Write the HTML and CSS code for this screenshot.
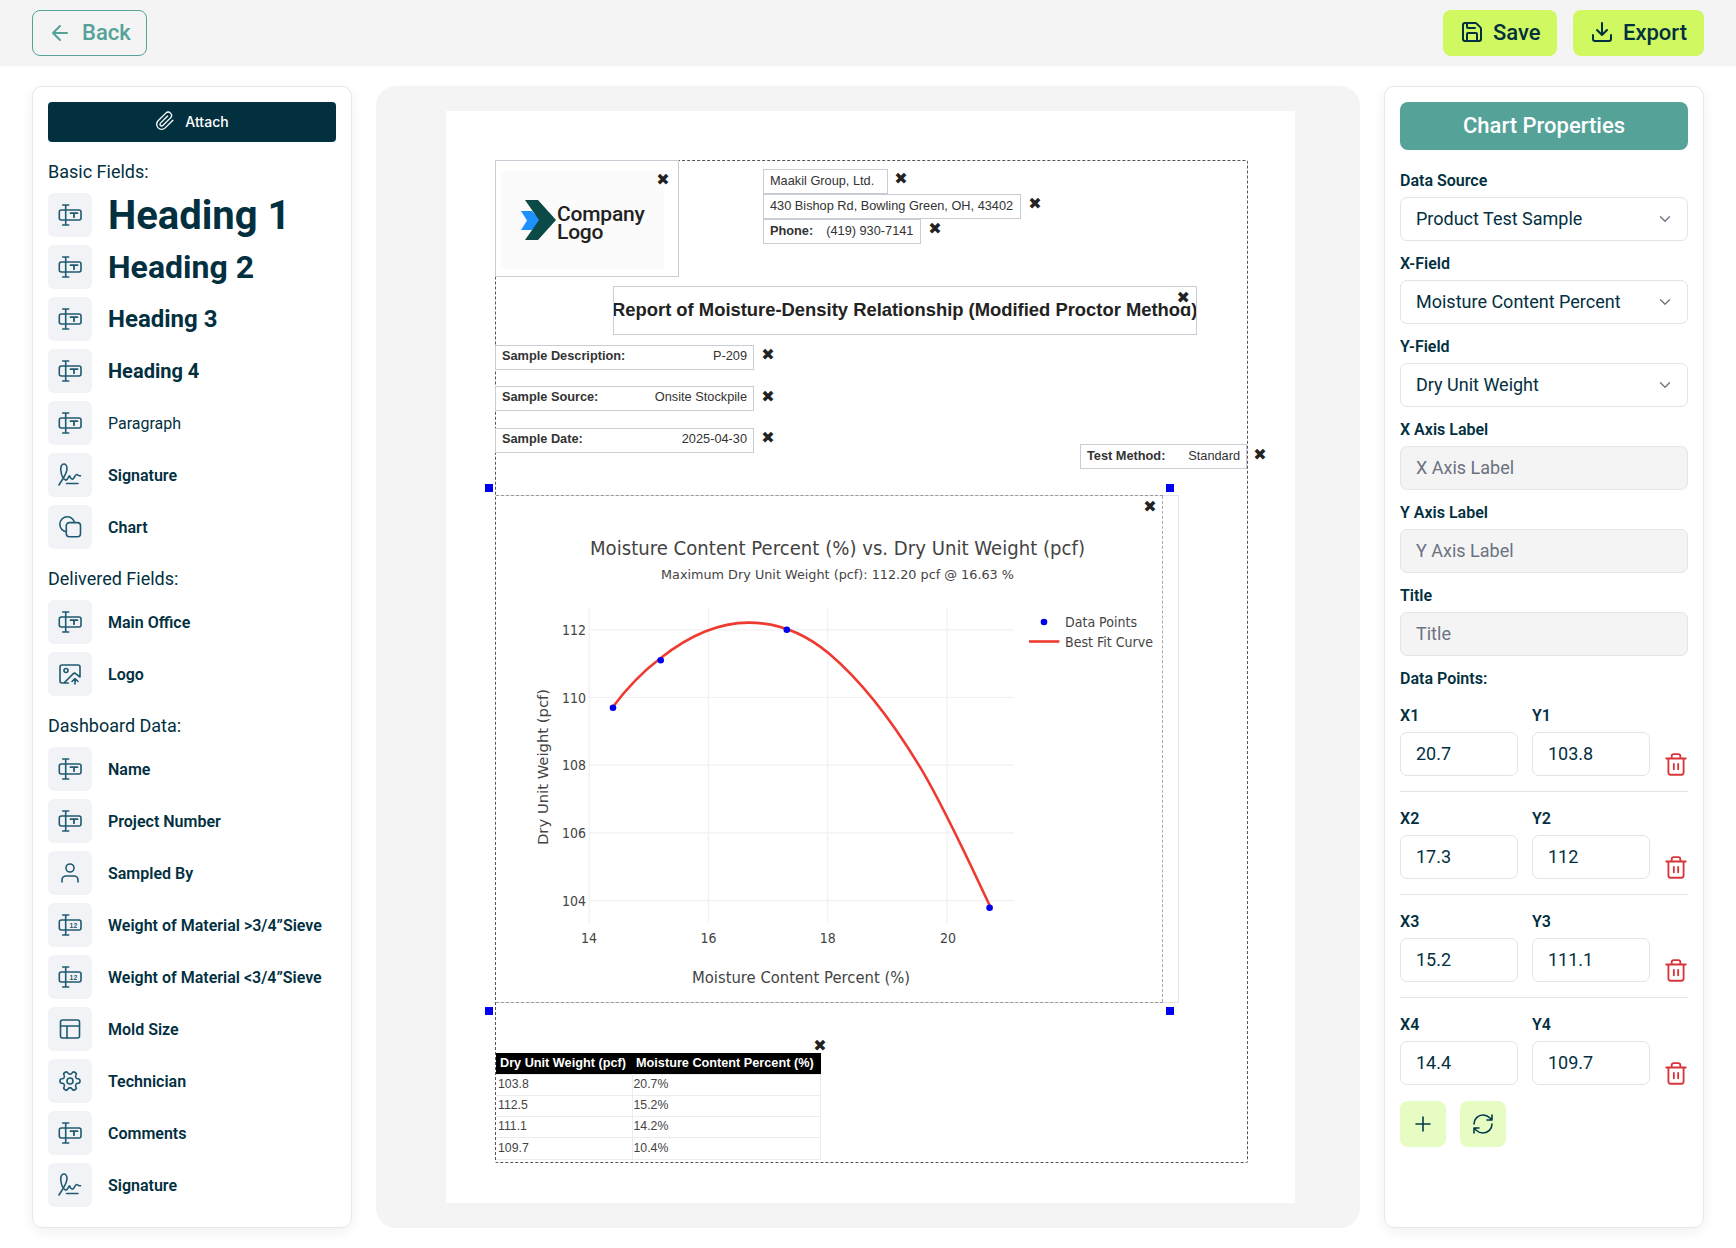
FILE: index.html
```html
<!DOCTYPE html>
<html lang="en">
<head>
<meta charset="utf-8">
<title>Report Builder</title>
<link rel="stylesheet" href="styles.css">
</head>
<body>
<svg class="defs" aria-hidden="true">
  <symbol id="i-field" viewBox="0 0 24 24"><path d="M4.700 2h6M4.700 22h6M7.700 2v20M7.700 7H3.300a2 2 0 0 0-2 2v6a2 2 0 0 0 2 2h4.400M7.700 7H21a2 2 0 0 1 2 2v6a2 2 0 0 1-2 2H7.700"/><path class="t" d="M12.500 10.200h7M16 10.200v4"/></symbol>
  <symbol id="i-num" viewBox="0 0 24 24"><path d="M4.700 2h6M4.700 22h6M7.700 2v20M7.700 7H3.300a2 2 0 0 0-2 2v6a2 2 0 0 0 2 2h4.400M7.700 7H21a2 2 0 0 1 2 2v6a2 2 0 0 1-2 2H7.700"/><text class="num" x="15.400" y="14.500">12</text></symbol>
  <symbol id="i-sign" viewBox="0 0 24 24"><path d="M1 22C4 17 9 11 9 5.500 9 2.500 7.500 1 6 1 3.500 1 2.500 4 2.800 7 3.200 11 5 16 7.500 17 9.500 17.800 10 14 11.500 12.800 12.300 15 13.300 16.500 15 16 16.500 15.500 17 11.500 18.500 11.500 19.800 11.500 20.500 13 22.500 12.800M8.500 20.500H20"/></symbol>
  <symbol id="i-shapes" viewBox="0 0 24 24"><circle cx="9.300" cy="9.300" r="7.500"/><rect class="tile-fill" x="8.300" y="7.600" width="14.200" height="14.200" rx="3"/></symbol>
  <symbol id="i-image" viewBox="0 0 24 24"><path d="M10.300 21H4a2 2 0 0 1-2-2V5a2 2 0 0 1 2-2h16a2 2 0 0 1 2 2v10l-4.100-3.100a2 2 0 0 0-2.814.014L6 21M14 19.500l3-3 3 3M17 22v-5.500"/><circle cx="8" cy="8.500" r="2"/></symbol>
  <symbol id="i-user" viewBox="0 0 24 24"><path d="M20 21v-2a4 4 0 0 0-4-4H8a4 4 0 0 0-4 4v2"/><circle cx="12" cy="7" r="4"/></symbol>
  <symbol id="i-table" viewBox="0 0 24 24"><rect x="2.500" y="3" width="19" height="18" rx="2"/><path d="M2.500 9h19M9 21V9"/></symbol>
  <symbol id="i-gear" viewBox="0 0 24 24"><g transform="rotate(90 12 12)"><path d="M12.220 2h-.44a2 2 0 0 0-2 2v.18a2 2 0 0 1-1 1.730l-.43.250a2 2 0 0 1-2 0l-.15-.08a2 2 0 0 0-2.730.730l-.22.380a2 2 0 0 0 .730 2.730l.15.100a2 2 0 0 1 1 1.720v.510a2 2 0 0 1-1 1.740l-.15.090a2 2 0 0 0-.730 2.730l.22.380a2 2 0 0 0 2.730.730l.15-.08a2 2 0 0 1 2 0l.43.250a2 2 0 0 1 1 1.730V20a2 2 0 0 0 2 2h.44a2 2 0 0 0 2-2v-.18a2 2 0 0 1 1-1.730l.43-.25a2 2 0 0 1 2 0l.15.08a2 2 0 0 0 2.730-.730l.22-.39a2 2 0 0 0-.730-2.730l-.15-.08a2 2 0 0 1-1-1.740v-.5a2 2 0 0 1 1-1.740l.15-.09a2 2 0 0 0 .730-2.730l-.22-.38a2 2 0 0 0-2.730-.730l-.15.08a2 2 0 0 1-2 0l-.43-.25a2 2 0 0 1-1-1.730V4a2 2 0 0 0-2-2z"/><circle cx="12" cy="12" r="3"/></g></symbol>
  <symbol id="i-trash" viewBox="0 0 24 24"><path d="M3 6h18M5 6v13a2 2 0 0 0 2 2h10a2 2 0 0 0 2-2V6M8 6V4a2 2 0 0 1 2-2h4a2 2 0 0 1 2 2v2M10 11v5M14 11v5"/></symbol>
  <symbol id="i-chev" viewBox="0 0 24 24"><path d="m6 9 6 6 6-6"/></symbol>
</svg>

<header class="topbar">
  <button class="btn-back">
    <svg class="ico ico-24 bold" viewBox="0 0 24 24"><path d="m12 19-7-7 7-7M19 12H5"/></svg>
    <span>Back</span>
  </button>
  <div class="top-actions">
    <button class="btn-lime btn-save">
      <svg class="ico ico-24 bold" viewBox="0 0 24 24"><path d="M15.200 3a2 2 0 0 1 1.400.6l3.800 3.800a2 2 0 0 1 .6 1.400V19a2 2 0 0 1-2 2H5a2 2 0 0 1-2-2V5a2 2 0 0 1 2-2zM17 21v-7a1 1 0 0 0-1-1H8a1 1 0 0 0-1 1v7M7 3v4a1 1 0 0 0 1 1h7"/></svg>
      <span>Save</span>
    </button>
    <button class="btn-lime btn-export">
      <svg class="ico ico-24 bold" viewBox="0 0 24 24"><path d="M21 15v4a2 2 0 0 1-2 2H5a2 2 0 0 1-2-2v-4M7 10l5 5 5-5M12 15V3"/></svg>
      <span>Export</span>
    </button>
  </div>
</header>

<main class="layout">
  <aside class="card side-left">
    <button class="btn-attach">
      <svg class="ico ico-20" viewBox="0 0 24 24"><path d="M21.440 11.050l-9.190 9.190a6 6 0 0 1-8.490-8.490l9.190-9.190a4 4 0 0 1 5.660 5.660l-9.200 9.190a2 2 0 0 1-2.830-2.830l8.490-8.480"/></svg>
      <span>Attach</span>
    </button>

    <h3 class="group">Basic Fields:</h3>
    <div class="rows">
      <div class="row"><span class="tile"><svg class="ico ico-24"><use href="#i-field"/></svg></span><span class="h1">Heading 1</span></div>
      <div class="row"><span class="tile"><svg class="ico ico-24"><use href="#i-field"/></svg></span><span class="h2">Heading 2</span></div>
      <div class="row"><span class="tile"><svg class="ico ico-24"><use href="#i-field"/></svg></span><span class="h3">Heading 3</span></div>
      <div class="row"><span class="tile"><svg class="ico ico-24"><use href="#i-field"/></svg></span><span class="h4">Heading 4</span></div>
      <div class="row"><span class="tile"><svg class="ico ico-24"><use href="#i-field"/></svg></span><span class="para">Paragraph</span></div>
      <div class="row"><span class="tile"><svg class="ico ico-24"><use href="#i-sign"/></svg></span><span class="item">Signature</span></div>
      <div class="row"><span class="tile"><svg class="ico ico-24"><use href="#i-shapes"/></svg></span><span class="item">Chart</span></div>
    </div>

    <h3 class="group">Delivered Fields:</h3>
    <div class="rows">
      <div class="row"><span class="tile"><svg class="ico ico-24"><use href="#i-field"/></svg></span><span class="item">Main Office</span></div>
      <div class="row"><span class="tile"><svg class="ico ico-24"><use href="#i-image"/></svg></span><span class="item">Logo</span></div>
    </div>

    <h3 class="group">Dashboard Data:</h3>
    <div class="rows">
      <div class="row"><span class="tile"><svg class="ico ico-24"><use href="#i-field"/></svg></span><span class="item">Name</span></div>
      <div class="row"><span class="tile"><svg class="ico ico-24"><use href="#i-field"/></svg></span><span class="item">Project Number</span></div>
      <div class="row"><span class="tile"><svg class="ico ico-24"><use href="#i-user"/></svg></span><span class="item">Sampled By</span></div>
      <div class="row"><span class="tile"><svg class="ico ico-24"><use href="#i-num"/></svg></span><span class="item">Weight of Material &gt;3/4”Sieve</span></div>
      <div class="row"><span class="tile"><svg class="ico ico-24"><use href="#i-num"/></svg></span><span class="item">Weight of Material &lt;3/4”Sieve</span></div>
      <div class="row"><span class="tile"><svg class="ico ico-24"><use href="#i-table"/></svg></span><span class="item">Mold Size</span></div>
      <div class="row"><span class="tile"><svg class="ico ico-24"><use href="#i-gear"/></svg></span><span class="item">Technician</span></div>
      <div class="row"><span class="tile"><svg class="ico ico-24"><use href="#i-field"/></svg></span><span class="item">Comments</span></div>
      <div class="row"><span class="tile"><svg class="ico ico-24"><use href="#i-sign"/></svg></span><span class="item">Signature</span></div>
    </div>
  </aside>

  <section class="stage">
    <div class="page">
      <div class="frame"></div>

      <div class="box logo-box"></div>
      <div class="logo-img">
        <svg class="logo-mark" viewBox="0 0 36 40"><path class="mark-blue" d="M0 11h11l9 9.500-9 9.500H0l6-9.500z"/><path class="mark-dark" d="M4 0h13l18 20-18 20H4l14-20z"/></svg>
        <span class="logo-text">Company<br>Logo</span>
      </div>
      <span class="x x-logo">✖</span>

      <div class="box fld f-org">Maakil Group, Ltd.</div><span class="x x-org">✖</span>
      <div class="box fld f-addr">430 Bishop Rd, Bowling Green, OH, 43402</div><span class="x x-addr">✖</span>
      <div class="box fld f-phone"><b>Phone:</b><span class="phone-val">(419) 930-7141</span></div><span class="x x-phone">✖</span>

      <div class="box f-title">Report of Moisture-Density Relationship (Modified Proctor Method)</div>
      <span class="x x-title">✖</span>

      <div class="box fld kv f-s1"><b>Sample Description:</b><span>P-209</span></div><span class="x x-s1">✖</span>
      <div class="box fld kv f-s2"><b>Sample Source:</b><span>Onsite Stockpile</span></div><span class="x x-s2">✖</span>
      <div class="box fld kv f-s3"><b>Sample Date:</b><span>2025-04-30</span></div><span class="x x-s3">✖</span>
      <div class="box fld kv f-test"><b>Test Method:</b><span>Standard</span></div><span class="x x-test">✖</span>

      <div class="chart-outer"><div class="chart-inner"></div></div>
      <i class="handle h-tl"></i><i class="handle h-tr"></i><i class="handle h-bl"></i><i class="handle h-br"></i>

      <svg class="chart" viewBox="446 111 849 1092">
        <g class="grid">
          <path d="M589.2 607V923M708.400 607V923M827.700 607V923M947 607V923"/>
          <path d="M589 629.800H1014M589 697.500H1014M589 765.200H1014M589 832.900H1014M589 900.600H1014"/>
        </g>
        <text class="c-title" x="590" y="555" textLength="495" lengthAdjust="spacingAndGlyphs">Moisture Content Percent (%) vs. Dry Unit Weight (pcf)</text>
        <text class="c-sub" x="661" y="579" textLength="353" lengthAdjust="spacingAndGlyphs">Maximum Dry Unit Weight (pcf): 112.20 pcf @ 16.63 %</text>
        <g class="c-tick c-end">
          <text x="586" y="634.500" textLength="24" lengthAdjust="spacingAndGlyphs">112</text>
          <text x="586" y="702.500" textLength="24" lengthAdjust="spacingAndGlyphs">110</text>
          <text x="586" y="770.200" textLength="24" lengthAdjust="spacingAndGlyphs">108</text>
          <text x="586" y="838.400" textLength="24" lengthAdjust="spacingAndGlyphs">106</text>
          <text x="586" y="906.300" textLength="24" lengthAdjust="spacingAndGlyphs">104</text>
        </g>
        <g class="c-tick">
          <text x="581" y="942.500" textLength="16" lengthAdjust="spacingAndGlyphs">14</text>
          <text x="700.400" y="942.500" textLength="16" lengthAdjust="spacingAndGlyphs">16</text>
          <text x="819.700" y="942.500" textLength="16" lengthAdjust="spacingAndGlyphs">18</text>
          <text x="940" y="942.500" textLength="16" lengthAdjust="spacingAndGlyphs">20</text>
        </g>
        <text class="c-axis" x="692" y="982.500" textLength="218" lengthAdjust="spacingAndGlyphs">Moisture Content Percent (%)</text>
        <text class="c-axis-y" transform="translate(547.500 845) rotate(-90)" textLength="156" lengthAdjust="spacingAndGlyphs">Dry Unit Weight (pcf)</text>
        <path class="curve" d="M613 706.800C628.900 685.300 644.800 670.100 660.700 658 689.700 635.200 718.600 622.600 748.600 622.600 775.600 622.600 802.600 631.400 829 653.500 859.600 679.500 890.200 717.300 921 768.700 944 807.200 967 857.600 990 906.100"/>
        <g class="dots">
          <circle cx="613" cy="707.700" r="3.300"/><circle cx="660.700" cy="660.300" r="3.300"/><circle cx="786.800" cy="629.800" r="3.300"/><circle cx="989.600" cy="907.700" r="3.300"/>
          <circle cx="1044" cy="622" r="3.300"/>
        </g>
        <path class="curve" d="M1029 641.500H1059.400"/>
        <text class="c-tick" x="1065" y="627" textLength="72" lengthAdjust="spacingAndGlyphs">Data Points</text>
        <text class="c-tick" x="1065" y="646.500" textLength="88" lengthAdjust="spacingAndGlyphs">Best Fit Curve</text>
      </svg>
      <span class="x x-chart">✖</span>

      <span class="x x-table">✖</span>
      <table class="data">
        <thead><tr><th>Dry Unit Weight (pcf)</th><th>Moisture Content Percent (%)</th></tr></thead>
        <tbody>
          <tr><td>103.8</td><td>20.7%</td></tr>
          <tr><td>112.5</td><td>15.2%</td></tr>
          <tr><td>111.1</td><td>14.2%</td></tr>
          <tr><td>109.7</td><td>10.4%</td></tr>
        </tbody>
      </table>
    </div>
  </section>

  <aside class="card side-right">
    <button class="btn-props">Chart Properties</button>
    <div class="form">
      <div class="field"><label>Data Source</label><div class="select"><span>Product Test Sample</span><svg class="ico chev"><use href="#i-chev"/></svg></div></div>
      <div class="field"><label>X-Field</label><div class="select"><span>Moisture Content Percent</span><svg class="ico chev"><use href="#i-chev"/></svg></div></div>
      <div class="field"><label>Y-Field</label><div class="select"><span>Dry Unit Weight</span><svg class="ico chev"><use href="#i-chev"/></svg></div></div>
      <div class="field"><label>X Axis Label</label><input class="inp muted" placeholder="X Axis Label"></div>
      <div class="field"><label>Y Axis Label</label><input class="inp muted" placeholder="Y Axis Label"></div>
      <div class="field"><label>Title</label><input class="inp muted" placeholder="Title"></div>
      <div class="field"><label>Data Points:</label></div>
    </div>
    <div class="points">
      <div class="point">
        <div class="field"><label>X1</label><input class="inp" value="20.7"></div>
        <div class="field"><label>Y1</label><input class="inp" value="103.8"></div>
        <svg class="ico trash"><use href="#i-trash"/></svg>
      </div>
      <div class="point">
        <div class="field"><label>X2</label><input class="inp" value="17.3"></div>
        <div class="field"><label>Y2</label><input class="inp" value="112"></div>
        <svg class="ico trash"><use href="#i-trash"/></svg>
      </div>
      <div class="point">
        <div class="field"><label>X3</label><input class="inp" value="15.2"></div>
        <div class="field"><label>Y3</label><input class="inp" value="111.1"></div>
        <svg class="ico trash"><use href="#i-trash"/></svg>
      </div>
      <div class="point">
        <div class="field"><label>X4</label><input class="inp" value="14.4"></div>
        <div class="field"><label>Y4</label><input class="inp" value="109.7"></div>
        <svg class="ico trash"><use href="#i-trash"/></svg>
      </div>
    </div>
    <div class="tools">
      <button class="btn-tool"><svg class="ico ico-24" viewBox="0 0 24 24"><path d="M5 12h14M12 5v14"/></svg></button>
      <button class="btn-tool"><svg class="ico ico-24" viewBox="0 0 24 24"><path d="M3 12a9 9 0 0 1 9-9 9.750 9.750 0 0 1 6.740 2.740L21 8M21 3v5h-5M21 12a9 9 0 0 1-9 9 9.750 9.750 0 0 1-6.740-2.740L3 16M8 16H3v5"/></svg></button>
    </div>
  </aside>
</main>
</body>
</html>
```

FILE: styles.css
```css
* { box-sizing: border-box; }
html, body { margin: 0; height: 100%; }
body { font-family: Roboto, "Liberation Sans", sans-serif; color: #03303f; background: #fff; width: 1736px; height: 1248px; overflow: hidden; }
button { font-family: inherit; cursor: pointer; }
.defs { position: absolute; width: 0; height: 0; }

.ico { fill: none; stroke: currentColor; stroke-width: 1.6; stroke-linecap: round; stroke-linejoin: round; flex: none; }
.ico.bold { stroke-width: 2; }
.ico-20 { width: 20px; height: 20px; }
.ico-24 { width: 24px; height: 24px; }

/* top bar */
.topbar { height: 66px; background: #f4f4f4; display: flex; align-items: flex-start; justify-content: space-between; padding: 10px 32px; }
.top-actions { display: flex; gap: 16px; }
.btn-back { width: 115px; height: 46px; border: 1.5px solid #55a299; border-radius: 8px; background: transparent; color: #55a299; display: flex; align-items: center; gap: 10px; padding: 0 15px 1px; font-size: 22px; font-weight: 500; }
.btn-lime { height: 46px; border: 0; border-radius: 8px; background: #d0f860; color: #03303f; display: flex; align-items: center; gap: 9px; padding: 0 17px 2px; font-size: 22px; font-weight: 500; }
.btn-save { width: 114px; }
.btn-export { width: 131px; }

/* layout */
.layout { height: 1182px; padding: 20px 32px; display: flex; gap: 24px; }
.card { width: 320px; flex: none; background: #fff; border: 1px solid #e8e8e8; border-radius: 10px; padding: 15px; box-shadow: 0 4px 14px rgba(0, 0, 0, .06); }

/* left */
.btn-attach { width: 100%; height: 40px; border: 0; border-radius: 4px; background: #03303f; color: #fff; display: flex; align-items: center; justify-content: center; gap: 10px; padding: 0 0 2px; font-family: Inter, sans-serif; font-size: 14px; font-weight: 500; }
.group { margin: 18px 0 9px; font-size: 18px; line-height: 24px; font-weight: 400; }
.rows { display: flex; flex-direction: column; gap: 8px; }
.row { display: flex; align-items: center; gap: 16px; height: 44px; }
.tile { width: 44px; height: 44px; border-radius: 6px; background: #f1f3f7; color: #1f5a70; display: flex; align-items: center; justify-content: center; flex: none; }
.t { stroke-width: 1.8; }
.num { font: 700 6.800px "Liberation Sans", sans-serif; stroke: none; fill: currentColor; text-anchor: middle; }
.tile-fill { fill: #f1f3f7; }
.h1 { font-size: 40px; font-weight: 700; white-space: nowrap; }
.h2 { font-size: 32px; font-weight: 700; }
.h3 { font-size: 24px; font-weight: 700; }
.h4 { font-size: 20px; font-weight: 700; }
.para { font-size: 16px; font-weight: 400; }
.item { font-size: 16px; font-weight: 600; white-space: nowrap; }

/* stage */
.stage { flex: 1; display: flex; background: #f4f4f4; border-radius: 20px; padding: 25px 65px 25px 70px; }
.page { position: relative; flex: 1; background: #fff; font-family: "Liberation Sans", Arial, sans-serif; color: #333; overflow: hidden; }
.frame { position: absolute; left: 49px; top: 49px; width: 753px; height: 1003px; border: 1px dashed #555; border-radius: 2px; }
.box { position: absolute; border: 1px solid #c8ccd4; background: #fff; }
.logo-box { left: 49px; top: 49px; width: 184px; height: 117px; }
.logo-img { position: absolute; left: 55px; top: 60px; width: 163px; height: 98px; background: #fbfbfb; display: flex; align-items: center; gap: 1px; padding-left: 20px; }
.logo-mark { width: 36px; height: 40px; flex: none; }
.mark-dark { fill: #0b4a46; }
.mark-blue { fill: #1e90ff; }
.logo-text { font-family: Roboto, sans-serif; font-weight: 500; font-size: 21px; line-height: 18px; color: #222; letter-spacing: -.2px; margin: 6px 0 0 -1px; }

.fld { display: flex; align-items: center; padding: 0 6px 3px; height: 25px; font-size: 12.750px; white-space: nowrap; }
.kv { justify-content: space-between; padding-left: 6px; padding-bottom: 4px; }
.phone-val { margin-left: 13px; }
.f-org { left: 317px; top: 58px; width: 125px; }
.f-addr { left: 317px; top: 83px; width: 258px; }
.f-phone { left: 317px; top: 108px; width: 158px; }
.f-title { left: 167px; top: 175px; width: 584px; height: 49px; display: flex; align-items: center; padding: 0 0 2px; font-size: 18.400px; font-weight: 700; color: #222; white-space: nowrap; overflow: hidden; text-indent: -2px; }
.f-s1 { left: 49px; top: 234px; width: 259px; }
.f-s2 { left: 49px; top: 275px; width: 259px; }
.f-s3 { left: 49px; top: 317px; width: 259px; }
.f-test { left: 634px; top: 333px; width: 167px; padding-bottom: 3px; }

.x { position: absolute; width: 16px; height: 16px; display: flex; align-items: center; justify-content: center; font: 16px "DejaVu Sans", sans-serif; color: #222; margin: -8px 0 0 -8px; line-height: 1; }
.x-logo { left: 217px; top: 69px; }
.x-org { left: 455px; top: 68px; }
.x-addr { left: 589px; top: 93px; }
.x-phone { left: 489px; top: 118px; }
.x-title { left: 725px; top: 187px; width: 28px; justify-content: flex-end; padding-right: 1px; background: #fff; }
.x-s1 { left: 322px; top: 244px; }
.x-s2 { left: 322px; top: 286px; }
.x-s3 { left: 322px; top: 327px; }
.x-test { left: 814px; top: 344px; }
.x-chart { left: 704px; top: 396px; }
.x-table { left: 374px; top: 935px; }

.chart-outer { position: absolute; left: 50px; top: 384px; width: 683px; height: 508px; border: 1px solid #e2e4e8; border-left: 0; }
.chart-inner { width: 667px; height: 506px; border-right: 1px dashed #aaa; }
.chart-outer::before { content: ""; position: absolute; left: 0; right: 15px; top: -1px; bottom: -1px; border-top: 1px dashed #999; border-bottom: 1px dashed #999; }
.handle { position: absolute; width: 7.500px; height: 7.500px; background: #0000ee; }
.h-tl { left: 39px; top: 373px; }
.h-tr { left: 720px; top: 373px; }
.h-bl { left: 39px; top: 896px; }
.h-br { left: 720px; top: 896px; }

.chart { position: absolute; left: 0; top: 0; width: 849px; height: 1092px; pointer-events: none; }
.grid path { stroke: #f1f1f3; stroke-width: 1.200; fill: none; }
.c-title { font: 19px "DejaVu Sans", sans-serif; fill: #444; }
.c-sub { font: 13px "DejaVu Sans", sans-serif; fill: #444; }
.c-tick, .c-tick text { font: 13.500px "DejaVu Sans", sans-serif; fill: #444; }
.c-end text { text-anchor: end; }
.c-axis { font: 16px "DejaVu Sans", sans-serif; fill: #444; }
.c-axis-y { font: 14.500px "DejaVu Sans", sans-serif; fill: #444; }
.curve { fill: none; stroke: #ee3a30; stroke-width: 2.600; }
.dots circle { fill: #0000ee; }

.data { position: absolute; left: 50px; top: 942px; width: 325px; border-collapse: collapse; table-layout: fixed; font-size: 12.300px; color: #444; }
.data th { background: #000; color: #fff; height: 21px; padding: 0 0 1px 4px; font-size: 12.700px; font-weight: 700; text-align: left; white-space: nowrap; }
.data th:first-child, .data td:first-child { width: 136px; }
.data td { height: 21.300px; padding: 0 0 2px 1px; border: 1px solid #ececf0; }
.data td:first-child { border-left: 0; padding-left: 2px; }

/* right */
.btn-props { width: 100%; height: 48px; border: 0; border-radius: 8px; background: #55a299; color: #fff; padding: 0 0 1px; font-size: 22px; font-weight: 500; }
.form { margin-top: 20px; display: flex; flex-direction: column; gap: 12px; }
.field { display: flex; flex-direction: column; gap: 7px; }
.field label { font-size: 16px; line-height: 20px; font-weight: 600; padding-top: 1px; margin-bottom: -1px; }
.select, .inp { height: 44px; width: 100%; border: 1px solid #e4e4e7; border-radius: 7px; background: #fff; padding: 0 15px 1px; font-family: Roboto, sans-serif; font-size: 18px; color: #03303f; }
.inp { padding-bottom: 1px; }
.select { display: flex; align-items: center; justify-content: space-between; padding-right: 13px; }
.chev { width: 18px; height: 18px; color: #6b7280; stroke-width: 1.700; }
.muted { background: #f4f4f5; }
.muted::placeholder { color: #6b7280; opacity: 1; }
.points { margin-top: 17px; }
.point { display: grid; grid-template-columns: 118px 118px 24px; column-gap: 14px; align-items: end; padding-bottom: 15px; margin-bottom: 16px; border-bottom: 1px solid #e4e4e7; }
.point:last-child { border-bottom: 0; margin-bottom: 0; padding-bottom: 0; }
.trash { width: 26px; height: 26px; color: #d9343a; stroke-width: 1.700; margin: 0 0 -2px -1px; }
.tools { margin-top: 16px; display: flex; gap: 14px; }
.btn-tool { width: 46px; height: 46px; border: 0; border-radius: 8px; background: #e6fcc3; color: #03394a; display: flex; align-items: center; justify-content: center; padding: 0; }
```
